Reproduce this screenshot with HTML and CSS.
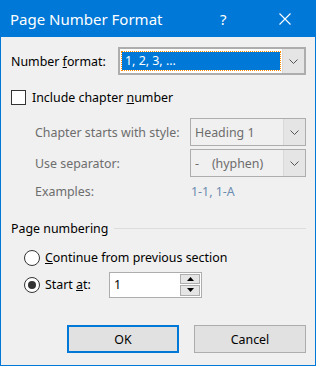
FILE: index.html
```html
<!DOCTYPE html>
<html>
<head>
<meta charset="utf-8">
<link rel="stylesheet" href="styles.css">
</head>
<body>
<div class="window">
  <div class="titlebar">
    <span class="title">Page Number Format</span>
    <span class="help">?</span>
    <span class="close">
      <svg width="12" height="12" viewBox="0 0 12 12"><path d="M0.5 0.5L11.5 11.5M11.5 0.5L0.5 11.5" stroke="#fff" stroke-width="1.1" fill="none"/></svg>
    </span>
  </div>
  <div class="content">
    <div class="row row-format">
      <span class="label">Number <u>f</u>ormat:</span>
      <div class="combo combo-focus">
        <div class="combo-value"><span class="sel">1, 2, 3, ...</span></div>
        <div class="combo-btn"><svg width="9" height="5" viewBox="0 0 9 5"><path d="M0.5 0.5L4.5 4.5L8.5 0.5" stroke="#555" fill="none"/></svg></div>
      </div>
    </div>
    <div class="row row-check">
      <span class="checkbox"></span>
      <span class="label">Include chapter <u>n</u>umber</span>
    </div>
    <div class="row row-indent row-chapter">
      <span class="label dim wide">Chapter starts with style:</span>
      <div class="combo combo-small">
        <div class="combo-value dimv">Heading 1</div>
        <div class="combo-btn"><svg width="9" height="5" viewBox="0 0 9 5"><path d="M0.5 0.5L4.5 4.5L8.5 0.5" stroke="#555" fill="none"/></svg></div>
      </div>
    </div>
    <div class="row row-indent row-sep">
      <span class="label dim wide">Use separator:</span>
      <div class="combo combo-small">
        <div class="combo-value dimv">-&nbsp;&nbsp;&nbsp;&nbsp;(hyphen)</div>
        <div class="combo-btn"><svg width="9" height="5" viewBox="0 0 9 5"><path d="M0.5 0.5L4.5 4.5L8.5 0.5" stroke="#555" fill="none"/></svg></div>
      </div>
    </div>
    <div class="row row-indent row-examples">
      <span class="label dim wide">Examples:</span>
      <span class="examples">1-1, 1-A</span>
    </div>
    <div class="row row-group">
      <span class="label">Page numbering</span>
      <span class="rule"></span>
    </div>
    <div class="row row-radio row-radio-first">
      <span class="radio"></span>
      <span class="label"><u>C</u>ontinue from previous section</span>
    </div>
    <div class="row row-radio">
      <span class="radio checked"></span>
      <span class="label start-label">Start <u>a</u>t:</span>
      <div class="spin">
        <span class="spin-value">1</span>
        <div class="spin-btns">
          <div class="spin-btn"><svg width="7" height="4" viewBox="0 0 7 4"><path d="M3.5 0L7 4H0Z" fill="#000"/></svg></div>
          <div class="spin-btn"><svg width="7" height="4" viewBox="0 0 7 4"><path d="M0 0H7L3.5 4Z" fill="#000"/></svg></div>
        </div>
      </div>
    </div>
    <div class="buttons">
      <div class="btn btn-default">OK</div>
      <div class="btn">Cancel</div>
    </div>
  </div>
</div>
</body>
</html>
```
FILE: styles.css
```css
* { box-sizing: border-box; }
html, body { margin: 0; padding: 0; }
body {
  width: 316px;
  height: 366px;
  font-family: "Noto Sans", "Open Sans", sans-serif;
  font-size: 12.4px;
  color: #000;
  background: #f0f0f0;
}
.window {
  width: 316px;
  height: 366px;
  border: 1px solid #0078d7;
  border-top: none;
  background: #f0f0f0;
  display: flex;
  flex-direction: column;
}
.titlebar {
  height: 37px;
  background: #0078d7;
  color: #fff;
  display: flex;
  align-items: center;
  padding-left: 10px;
  margin: 0 -1px;
}
.title {
  font-size: 15px;
  flex: 1;
  padding-top: 1px;
}
.help {
  font-size: 15px;
  width: 12px;
  margin-right: 47px;
  padding-top: 1px;
}
.close {
  width: 12px;
  height: 12px;
  margin-right: 25px;
  display: flex;
}
.content {
  display: flex;
  flex-direction: column;
  padding: 10px 9px 0 10px;
}
.row {
  display: flex;
  align-items: center;
  height: 28px;
}
.label { white-space: nowrap; }
.row-format .label { width: 107px; }
.combo {
  display: flex;
  border: 1px solid #adadad;
  background: #fff;
  height: 28px;
}
.combo-focus {
  width: 188px;
  border: 2px solid #adadad;
}
.combo-value {
  flex: 1;
  display: flex;
  align-items: center;
  padding: 2px;
}
.sel {
  flex: 1;
  height: 18px;
  background: #0078d7;
  color: #fff;
  outline: 1px dotted #ff8c00;
  outline-offset: 0;
  padding-left: 3px;
  line-height: 17px;
}
.combo-btn {
  width: 22px;
  background: #e5e5e5;
  border-left: 1px solid #d9d9d9;
  display: flex;
  align-items: center;
  justify-content: center;
}
.row-check { margin-top: 8px; }
.checkbox {
  width: 15px;
  height: 15px;
  border: 1px solid #333;
  background: #fff;
  margin-right: 6px;
}
.row-indent { padding-left: 24px; }
.row-chapter { margin-top: 7px; }
.row-sep { margin-top: 3px; }
.dim { color: #6d6d6d; }
.wide { width: 155px; }
.combo-small {
  width: 116px;
  border-color: #adadad;
  background: #f0f0f0;
}
.dimv { color: #6d6d6d; padding-left: 4px; background: #f0f0f0; }
.combo-small .combo-btn { background: #e5e5e5; }
.examples { color: #6d8cb1; padding-left: 1px; }
.row-group { margin-top: 9px; }
.rule {
  flex: 1;
  height: 1px;
  background: #dcdcdc;
  margin-left: 6px;
}
.row-radio { padding-left: 13px; height: 27px; }
.row-radio-first { margin-top: 2px; }
.radio {
  width: 16px;
  height: 16px;
  border: 1px solid #333;
  border-radius: 50%;
  background: #fff;
  margin-right: 5px;
  display: flex;
  align-items: center;
  justify-content: center;
}
.radio.checked::after {
  content: "";
  width: 8px;
  height: 8px;
  border-radius: 50%;
  background: #333;
}
.start-label { width: 64px; }
.spin {
  width: 93px;
  height: 26px;
  border: 1px solid #adadad;
  background: #fff;
  display: flex;
  align-items: center;
  padding: 1px;
}
.spin-value { flex: 1; padding-left: 3px; }
.spin-btns {
  display: flex;
  flex-direction: column;
  gap: 1px;
  width: 20px;
  height: 100%;
}
.spin-btn {
  flex: 1;
  background: #e5e5e5;
  border: 1px solid #adadad;
  display: flex;
  align-items: center;
  justify-content: center;
}
.buttons {
  display: flex;
  justify-content: flex-end;
  gap: 15px;
  margin-top: 27px;
}
.btn {
  width: 112px;
  height: 28px;
  background: #e1e1e1;
  border: 1px solid #adadad;
  display: flex;
  align-items: center;
  justify-content: center;
}
.btn-default { border: 2px solid #0078d7; }
```
